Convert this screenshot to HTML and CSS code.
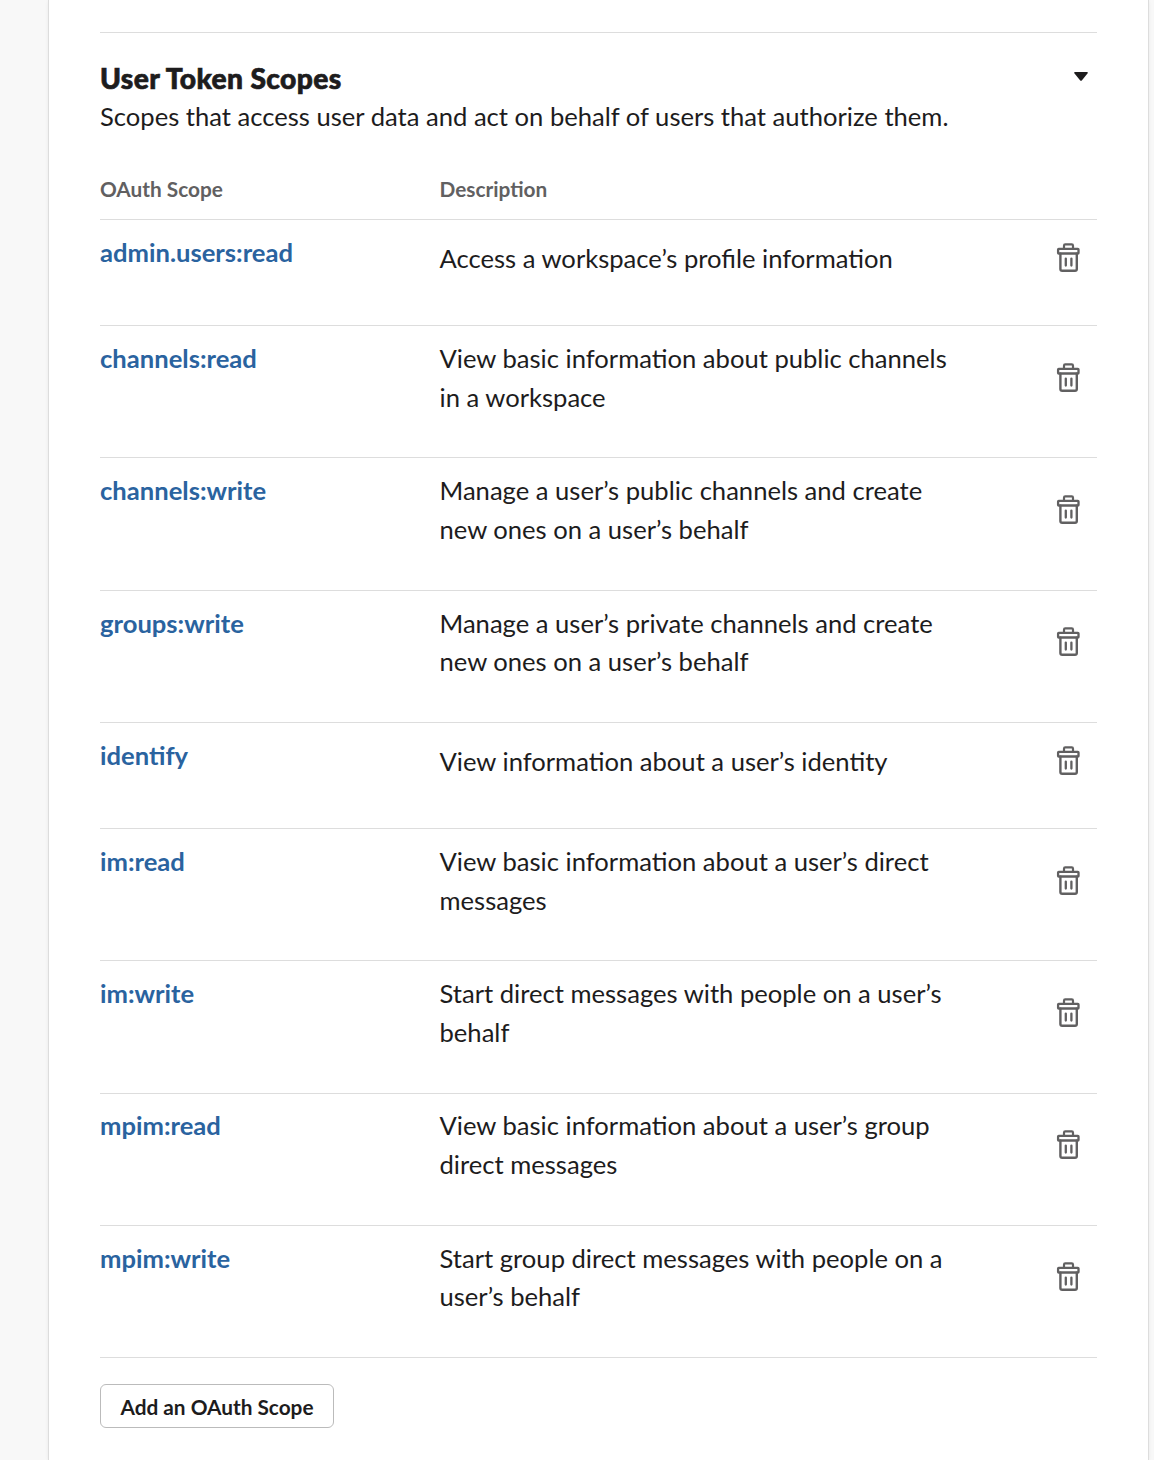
FILE: index.html
```html
<!DOCTYPE html>
<html lang="en">
<head>
<meta charset="utf-8">
<title>User Token Scopes</title>
<link rel="stylesheet" href="styles.css">
</head>
<body>
<svg class="sprite" aria-hidden="true">
  <symbol id="trash" viewBox="0 0 24 30">
    <g fill="none" stroke="currentColor" stroke-linejoin="round" stroke-linecap="round">
      <path stroke-width="2.2" d="M8 5.6V2.7Q8 1.4 9.3 1.4H15.7Q17 1.4 17 2.7V5.6"/>
      <rect stroke-width="2.3" x="2.1" y="5.8" width="20.4" height="4.7" rx="0.6"/>
      <path stroke-width="2.4" d="M4.4 10.8V26Q4.4 27.8 6.2 27.8H19Q20.8 27.8 20.8 26V10.8"/>
      <path stroke-width="2.3" d="M9.8 15.6V22.6M15.4 15.6V22.6"/>
    </g>
  </symbol>
</svg>
<main class="card">
  <section class="scopes">
    <header class="head">
      <div>
        <h2 class="title">User Token Scopes</h2>
        <p class="lead">Scopes that access user data and act on behalf of users that authorize them.</p>
      </div>
      <svg class="caret" viewBox="0 0 14 9"><path d="M1 0H13Q14.4 .3 13.5 1.6L8 8.2Q7 9.2 6 8.2L.5 1.6Q-.4 .3 1 0Z" fill="currentColor"/></svg>
    </header>
    <div class="labels"><span>OAuth Scope</span><span>Description</span></div>
    <div class="row"><a class="scope">admin.users:read</a><p class="desc">Access a workspace’s profile information</p><button class="delete" aria-label="Delete"><svg class="icon"><use href="#trash"/></svg></button></div>
    <div class="row"><a class="scope">channels:read</a><p class="desc">View basic information about public channels in a workspace</p><button class="delete" aria-label="Delete"><svg class="icon"><use href="#trash"/></svg></button></div>
    <div class="row"><a class="scope">channels:write</a><p class="desc">Manage a user’s public channels and create new ones on a user’s behalf</p><button class="delete" aria-label="Delete"><svg class="icon"><use href="#trash"/></svg></button></div>
    <div class="row"><a class="scope">groups:write</a><p class="desc">Manage a user’s private channels and create new ones on a user’s behalf</p><button class="delete" aria-label="Delete"><svg class="icon"><use href="#trash"/></svg></button></div>
    <div class="row"><a class="scope">identify</a><p class="desc">View information about a user’s identity</p><button class="delete" aria-label="Delete"><svg class="icon"><use href="#trash"/></svg></button></div>
    <div class="row"><a class="scope">im:read</a><p class="desc">View basic information about a user’s direct messages</p><button class="delete" aria-label="Delete"><svg class="icon"><use href="#trash"/></svg></button></div>
    <div class="row"><a class="scope">im:write</a><p class="desc">Start direct messages with people on a user’s behalf</p><button class="delete" aria-label="Delete"><svg class="icon"><use href="#trash"/></svg></button></div>
    <div class="row"><a class="scope">mpim:read</a><p class="desc">View basic information about a user’s group direct messages</p><button class="delete" aria-label="Delete"><svg class="icon"><use href="#trash"/></svg></button></div>
    <div class="row"><a class="scope">mpim:write</a><p class="desc">Start group direct messages with people on a user’s behalf</p><button class="delete" aria-label="Delete"><svg class="icon"><use href="#trash"/></svg></button></div>
    <button class="add">Add an OAuth Scope</button>
  </section>
</main>
</body>
</html>
```
FILE: styles.css
```css
* { box-sizing: border-box; }
body {
  margin: 0;
  background: #f8f8f8;
  color: #1d1c1d;
  font-family: Lato, sans-serif;
  font-size: 25.6px;
  line-height: 38.6px;
}
h2, p { margin: 0; }
button { font-family: inherit; color: inherit; background: none; border: 0; padding: 0; }
.sprite { display: none; }
.card {
  margin: 0 6px 0 49px;
  min-height: 1460px;
  padding: 32px 51px 0 51px;
  background: #fff;
  box-shadow: 0 0 0 1px #ddd, 0 1px 4px rgba(0, 0, 0, .1);
}
.scopes { border-top: 1px solid #ddd; }
.head {
  display: flex;
  justify-content: space-between;
  padding-top: 26px;
  height: 133px;
}
.title {
  font-size: 28.2px;
  font-weight: 900;
  line-height: 39px;
  letter-spacing: .38px;
  -webkit-text-stroke: .7px currentColor;
}
.lead { line-height: 37px; }
.caret { width: 14px; height: 9px; margin: 13px 9px 0 0; }
.labels {
  display: grid;
  grid-template-columns: 339.5px 1fr;
  height: 54px;
  padding-top: 4px;
  border-bottom: 1px solid #ddd;
  color: #616061;
  font-size: 20.8px;
  font-weight: 700;
}
.row {
  display: grid;
  grid-template-columns: 339.5px 520px 1fr;
  align-items: center;
  padding: 12.8px 17px 41.25px 0;
  border-bottom: 1px solid #ddd;
}
.scope { align-self: start; color: #2a639f; font-weight: 700; }
.delete {
  justify-self: end;
  display: grid;
  place-items: center;
  width: 24px;
  height: 51.2px;
  color: #616061;
}
.icon { width: 24px; height: 30px; }
.add {
  display: block;
  width: 234px;
  height: 44px;
  margin-top: 26px;
  border: 1px solid #bbb;
  border-radius: 6px;
  font-size: 20.8px;
  font-weight: 700;
}
```
